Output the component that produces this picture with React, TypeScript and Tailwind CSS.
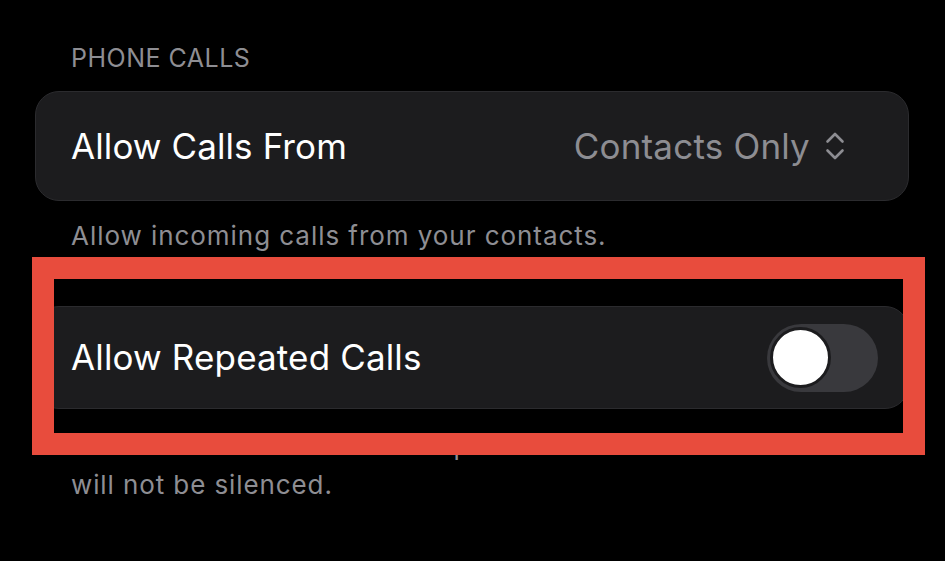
import React from "react";

function UpDown() {
  return (
    <svg width="20" height="28" viewBox="0 0 20 28" fill="none" stroke="#8d8d92" strokeWidth="2.6" strokeLinecap="round" strokeLinejoin="round">
      <path d="M2.5 9.5 L10 2 L17.5 9.5" />
      <path d="M2.5 18.5 L10 26 L17.5 18.5" />
    </svg>
  );
}

export default function App() {
  return (
    <div
      className="relative w-[945px] h-[561px] overflow-hidden bg-black"
      style={{ fontFamily: "Inter, 'Liberation Sans', sans-serif" }}
    >
      <div className="pt-[43px] pl-[35px] pr-[36px]">
        <div className="pl-[36px] text-[25px] leading-[30px] tracking-[0.5px] text-[#8e8e93]">PHONE CALLS</div>

        <div className="mt-[18px] h-[110px] rounded-[24px] bg-[#1c1c1e] border border-[#2b2b2e] flex items-center justify-between pl-[35px] pr-[63px]">
          <span className="text-[35px] text-white tracking-[0.1px]">Allow Calls From</span>
          <span className="flex items-center gap-[15px]">
            <span className="text-[35px] text-[#8d8d92] tracking-[0.2px]">Contacts Only</span>
            <UpDown />
          </span>
        </div>

        <div className="pl-[36px] mt-[19px] text-[26px] leading-[32px] tracking-[0.95px] text-[#8e8e93]">
          Allow incoming calls from your contacts.
        </div>

        <div className="mt-[54px] h-[103px] rounded-[24px] bg-[#1c1c1e] border border-[#2b2b2e] flex items-center justify-between pl-[35px] pr-[30px]">
          <span className="text-[35px] text-white tracking-[0.15px]">Allow Repeated Calls</span>
          <div className="w-[111px] h-[68px] rounded-full bg-[#39393d] p-[3px] flex items-center">
            <div className="w-[61px] h-[61px] rounded-full bg-white border-[3px] border-[#1c1c1e]" />
          </div>
        </div>

        <div className="pl-[36px] mt-[17px] text-[26px] leading-[39px] tracking-[0.9px] text-[#8e8e93]">
          <div>A second call from the same person within three minutes</div>
          <div>will not be silenced.</div>
        </div>
      </div>

      <div className="absolute left-[32px] top-[257px] w-[893px] h-[198px] border-[22px] border-[#e84c3d]" />
    </div>
  );
}
